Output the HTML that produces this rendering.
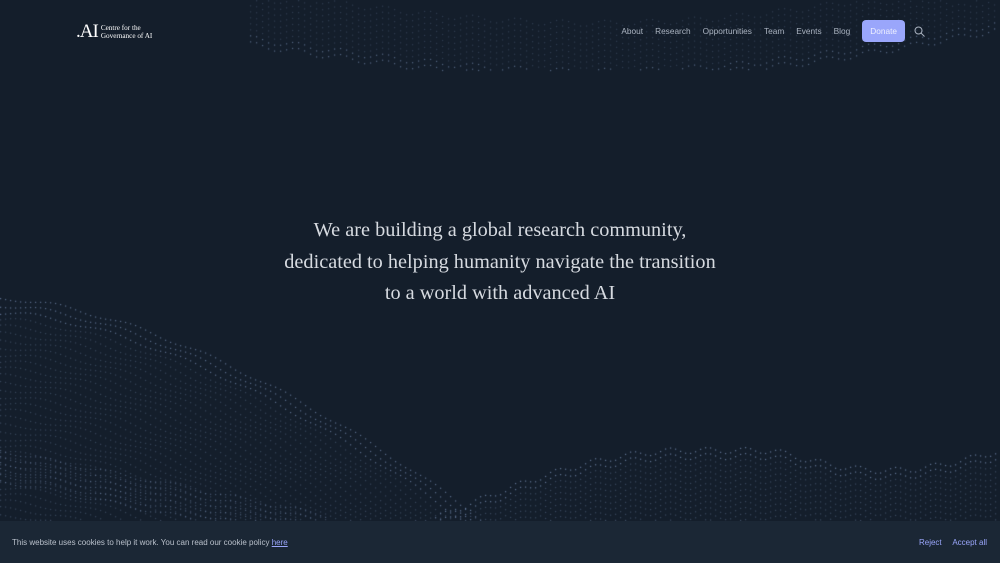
<!DOCTYPE html>
<html><head><meta charset="utf-8"><style>
html,body{margin:0;padding:0}
body{width:1000px;height:563px;background:#141e2b;position:relative;overflow:hidden;font-family:"Liberation Sans",sans-serif}
canvas{position:absolute;left:0;top:0}
.logo{position:absolute;left:76px;top:24px;color:#fff;display:flex;align-items:center}
.logo .ai{font-family:"Liberation Serif",serif;font-size:19px;letter-spacing:-1px;line-height:16px}
.logo .t{font-family:"Liberation Serif",serif;font-size:7.2px;line-height:8px;margin-left:3px}
nav{position:absolute;top:20px;right:75px;display:flex;align-items:center;font-size:8.3px;color:#aab3c0}
nav span{margin-right:12px}
.don{background:#9aa6fb;color:#eef0ff;padding:0 8px;height:22px;line-height:22px;border-radius:4px;margin-right:9px}
h1{position:absolute;top:215px;left:0;width:1000px;text-align:center;margin:0;font-family:"Liberation Serif",serif;font-weight:normal;font-size:20.3px;line-height:31.5px;color:#d6dae0}
.cb{position:absolute;left:0;top:521px;width:1000px;height:42px;background:#1b2735;font-size:8px;color:#b9c0cb}
.cb .l{position:absolute;left:12px;top:17px}
.cb a{color:#9aa6fb;text-decoration:underline}
.cb .r{position:absolute;right:13px;top:17px;color:#9aa6fb}
</style></head><body>
<canvas id="c" width="1000" height="563"></canvas>
<div class="logo"><span class="ai">.AI</span><span class="t">Centre for the<br>Governance of AI</span></div>
<nav><span>About</span><span>Research</span><span>Opportunities</span><span>Team</span><span>Events</span><span>Blog</span><span class="don">Donate</span>
<svg width="11" height="11" viewBox="0 0 11 11"><circle cx="4.5" cy="4.5" r="3.5" fill="none" stroke="#aab3c0" stroke-width="1"/><path d="M7 7L10.5 10.5" stroke="#aab3c0" stroke-width="1"/></svg></nav>
<h1>We are building a global research community,<br>dedicated to helping humanity navigate the transition<br>to a world with advanced AI</h1>
<div class="cb"><div class="l">This website uses cookies to help it work. You can read our cookie policy <a>here</a></div><div class="r">Reject &nbsp;&nbsp;&nbsp; Accept all</div></div>
<script>
(function(){
var c=document.getElementById('c').getContext('2d');
function dot(x,y,a){c.fillStyle='rgba(150,175,220,'+a+')';c.fillRect(x,y,1.2,1.2);}
for(var r=0;r<40;r++){for(var x=0;x<520;x+=5){
var tp=298+Math.pow(x/480,1.6)*220;var y=tp+r*7+Math.sin(x/12+r)*2;
if(y>520)continue;dot(x,y,r<3?0.55:0.28);}}
for(var r=0;r<6;r++){for(var x=0;x<330;x+=5){var y=450+x*0.2+r*6+Math.sin(x/10)*2;if(y<520)dot(x,y,0.4);}}
for(var r=0;r<14;r++){for(var x=430;x<1000;x+=5){
var t=(x-430)/570;var y=520-70*Math.sin(Math.min(t*2.2,1)*Math.PI/2)+(t>0.6?20*Math.sin((t-0.6)*Math.PI*2.5):0)+r*6+Math.sin(x/6)*3;
if(y<520)dot(x,y,r<2?0.6:0.3);}}
for(var r=0;r<10;r++){for(var x=250;x<1000;x+=6){
var t=(x-250)/750;var y=-10+r*6+Math.sin(t*Math.PI)*40-t*15+Math.sin(x/7)*3;
if(y>0&&y<70)dot(x,y,r>7?0.5:0.22);}}
})();
</script>
</body></html>
